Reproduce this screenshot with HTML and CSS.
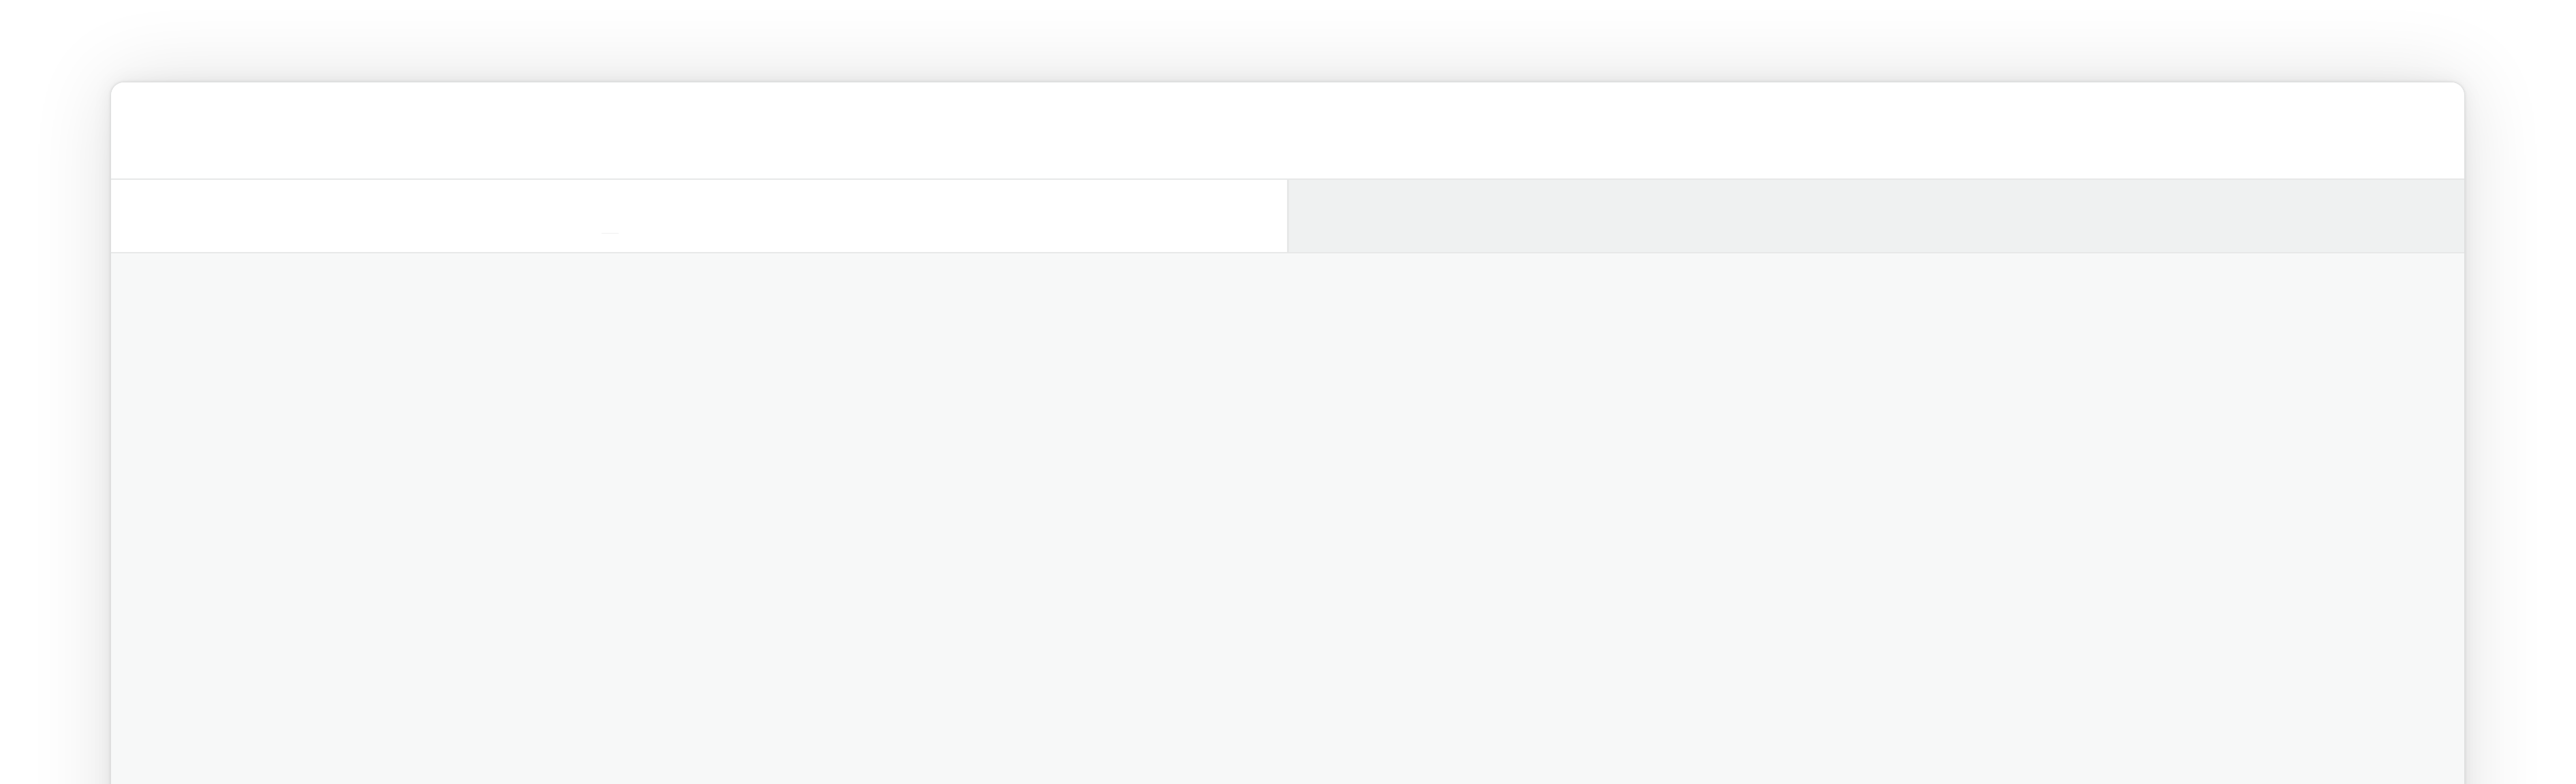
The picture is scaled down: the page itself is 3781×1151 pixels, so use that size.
FILE: index.html
```html
<!DOCTYPE html>
<html>
<head>
<meta charset="utf-8">
<link rel="stylesheet" href="styles.css">
</head>
<body>
<div class="stage">
  <div class="window">
    <div class="titlebar"></div>
    <div class="tabs">
      <div class="tab tab-active"><span class="tab-mark"></span></div>
      <div class="tab tab-inactive"></div>
    </div>
    <div class="content"></div>
  </div>
</div>
</body>
</html>
```
FILE: styles.css
```css
html, body {
  margin: 0;
  padding: 0;
  background: #ffffff;
  overflow: hidden;
  font-family: "Liberation Sans", Arial, sans-serif;
}
.stage {
  width: 3781px;
  height: 1151px;
  padding: 120px 0 0 162px;
  box-sizing: border-box;
  overflow: hidden;
}
.window {
  width: 3456px;
  height: 1300px;
  border-radius: 20px 20px 0 0;
  border: 1px solid #dedfdf;
  box-sizing: border-box;
  background: #f7f8f8;
  overflow: hidden;
  display: flex;
  flex-direction: column;
  box-shadow: 0 0 4px rgba(0,0,0,0.10), 0 0 30px rgba(0,0,0,0.06), 0 0 120px rgba(0,0,0,0.12);
}
.titlebar {
  height: 141px;
  background: #ffffff;
  border-bottom: 2px solid #e7e8e8;
  flex: none;
}
.tabs {
  height: 106px;
  display: flex;
  border-bottom: 2px solid #e7e8e8;
  flex: none;
}
.tab {
  flex: 1;
  position: relative;
}
.tab-active {
  background: #ffffff;
  border-right: 3px solid #e7e8e8;
}
.tab-inactive {
  background: #eff1f1;
}
.tab-mark {
  position: absolute;
  left: 720px;
  top: 78px;
  width: 25px;
  height: 1px;
  background: #f0f1f1;
}
.content {
  flex: 1;
  background: #f7f8f8;
}
```
